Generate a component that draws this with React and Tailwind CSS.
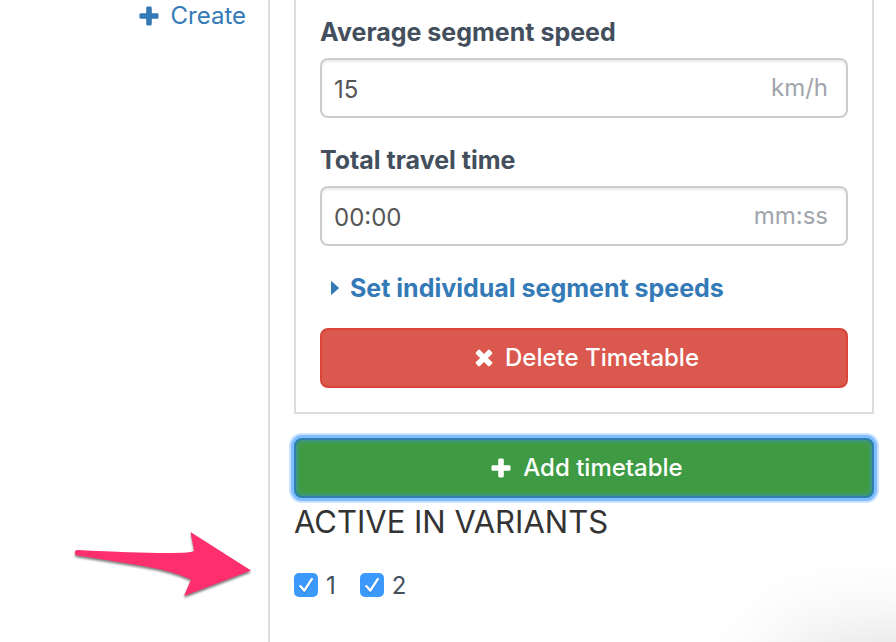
function PlusIcon() {
  return (
    <svg viewBox="0 0 20 20" className="size-5 shrink-0" fill="currentColor" aria-hidden="true">
      <rect x="0.5" y="7.2" width="19" height="5.6" rx="1.4" />
      <rect x="7.2" y="0.5" width="5.6" height="19" rx="1.4" />
    </svg>
  );
}

function TimesIcon() {
  return (
    <svg viewBox="0 0 18 18" className="size-[18px] shrink-0" aria-hidden="true">
      <g fill="currentColor" transform="rotate(45 9 9)">
        <rect x="-0.8" y="6.2" width="19.6" height="5.6" rx="1.3" />
        <rect x="6.2" y="-0.8" width="5.6" height="19.6" rx="1.3" />
      </g>
    </svg>
  );
}

function Field({ id, label, value, unit }) {
  return (
    <div className="mb-6">
      <label htmlFor={id} className="mb-2 block text-[25px] leading-9 font-bold text-[#434f5d]">
        {label}
      </label>
      <div className="flex h-15 items-center rounded-lg border-2 border-[#ccc] bg-white pr-4.5 pl-3 shadow-[inset_0_2px_2px_rgba(0,0,0,0.075)]">
        <input
          id={id}
          type="text"
          defaultValue={value}
          className="h-full min-w-0 flex-1 bg-transparent pt-0.5 text-2xl text-[#555] outline-none"
        />
        <span className="text-2xl text-[#a0a5ac]">{unit}</span>
      </div>
    </div>
  );
}

function Variant({ id, label }) {
  return (
    <div className="flex items-center gap-2">
      <span className="grid size-6 place-items-center">
        <input
          id={id}
          type="checkbox"
          defaultChecked
          className="col-start-1 row-start-1 size-6 appearance-none rounded-[5px] bg-white checked:bg-[#3b99fc]"
        />
        <svg
          viewBox="0 0 24 24"
          className="pointer-events-none z-10 col-start-1 row-start-1 size-6 drop-shadow-[0_1px_0_rgba(0,60,140,0.4)]"
          fill="none"
          stroke="white"
          strokeWidth="2.4"
          strokeLinecap="round"
          strokeLinejoin="round"
          aria-hidden="true"
        >
          <path d="M6.4 13.2 10.3 17.6 17.8 6.2" />
        </svg>
      </span>
      <label htmlFor={id} className="pt-0.5 text-2xl text-[#434f5d]">
        {label}
      </label>
    </div>
  );
}

export default function App() {
  return (
    <div className="relative flex min-h-screen overflow-hidden bg-white font-['Inter','Liberation_Sans',sans-serif]">
      <aside className="flex w-[270px] shrink-0 items-start justify-end border-r-2 border-[#dcdcdc] pr-[22px]">
        <a href="#create" className="flex items-center gap-3 text-2xl text-[#337ab7]">
          <PlusIcon />
          Create
        </a>
      </aside>

      <main className="min-w-0 flex-1 pr-[22px] pl-6">
        <section className="border-x-2 border-b-2 border-[#dcdcdc] px-6 pt-3.5 pb-6">
          <Field id="speed" label="Average segment speed" value="15" unit="km/h" />
          <Field id="time" label="Total travel time" value="00:00" unit="mm:ss" />
          <a href="#segments" className="mb-[22px] flex items-center pl-2.5 text-[25px] leading-9 font-bold text-[#337ab7]">
            <svg viewBox="0 0 10 14" className="mr-2.5 h-3.5 w-2.5" fill="currentColor" aria-hidden="true">
              <path d="M1 0.8Q1-.2 1.8.6L8.6 6.4Q9.2 7 8.6 7.6L1.8 13.4Q1 14.2 1 13.2Z" />
            </svg>
            Set individual segment speeds
          </a>
          <button
            type="button"
            className="flex h-15 w-full items-center justify-center gap-3 rounded-lg border-2 border-[#d9453a] bg-[#db584e] pl-1.5 text-2xl font-medium text-white"
          >
            <TimesIcon />
            Delete Timetable
          </button>
        </section>

        <button
          type="button"
          className="mt-6 flex h-15 w-full items-center justify-center gap-3 rounded-lg border-2 border-[#2f7fae] bg-[#3f9b43] pl-1.5 text-2xl font-medium text-white shadow-[inset_0_0_0_3px_#3f9874,0_0_0_3px_#80bdff,0_0_0_5px_#c8e2ff]"
        >
          <PlusIcon />
          Add timetable
        </button>

        <h2 className="mt-1 text-[31px] leading-10 text-[#333]">ACTIVE IN VARIANTS</h2>
        <div className="mt-[26px] flex gap-6">
          <Variant id="variant-1" label="1" />
          <Variant id="variant-2" label="2" />
        </div>
      </main>

      <svg
        viewBox="0 0 190 80"
        className="pointer-events-none absolute top-[525px] left-[70px] h-20 w-[190px] drop-shadow-[0_2px_1px_rgba(0,0,0,0.5)]"
        fill="#ff2f6e"
        aria-hidden="true"
      >
        <path d="M7.5 25Q65 28 95 28T124 25.5L120.5 7 181 45.5 114 71 121 54.5Q103 46 73 41T7.5 30.5Q4.8 30 4.8 27.5T7.5 25Z" />
      </svg>
      <div className="pointer-events-none absolute -right-50 -bottom-52 h-50 w-77 rounded-xl shadow-[0_0_100px_rgba(0,0,0,0.17)]" />
    </div>
  );
}
